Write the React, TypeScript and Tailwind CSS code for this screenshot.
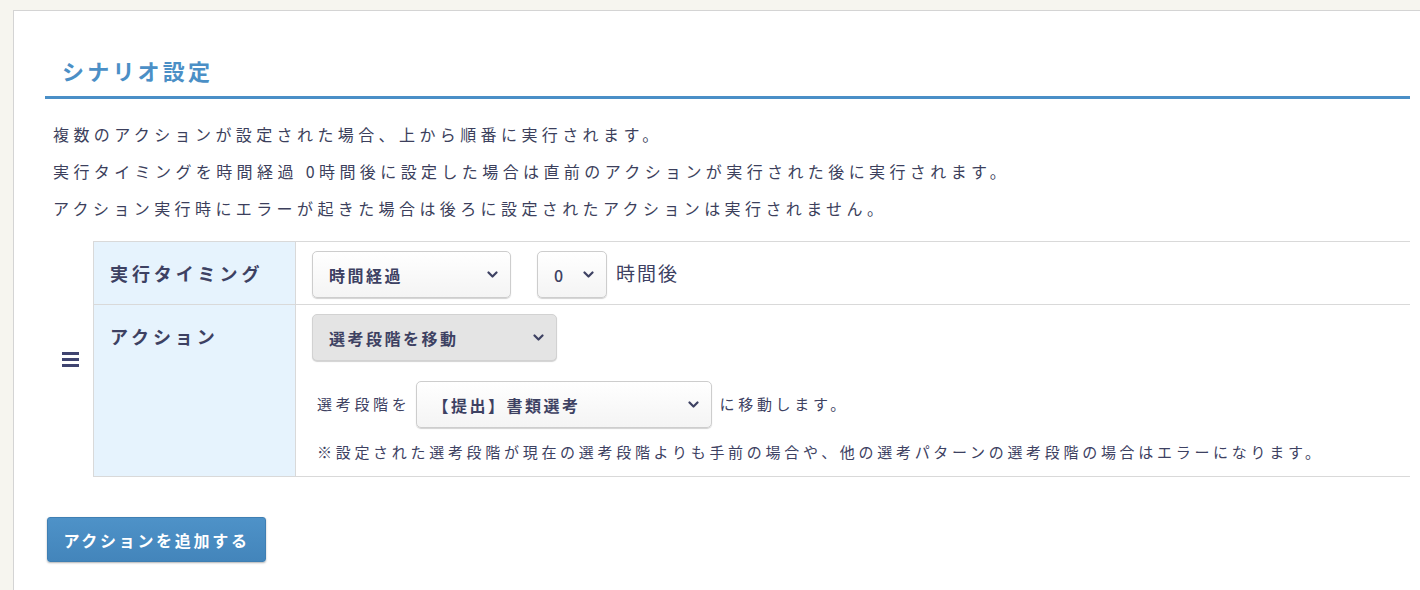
import React from "react";

const font = { fontFamily: '"Noto Sans CJK JP", "Noto Sans", sans-serif' };

function Chevron({ className = "" }: { className?: string }) {
  return (
    <svg width="11" height="8" viewBox="0 0 11 8" className={className}>
      <path d="M1.5 1.5 L5.5 5.5 L9.5 1.5" fill="none" stroke="#3d4162" strokeWidth="2.2" strokeLinecap="round" strokeLinejoin="round" />
    </svg>
  );
}

function FakeSelect({
  width,
  label,
  gray = false,
  bold = true,
}: {
  width: string;
  label: string;
  gray?: boolean;
  bold?: boolean;
}) {
  return (
    <div
      className={`${width} h-[47px] flex items-center justify-between pl-[16px] pr-[12px] rounded-[5px] border ${
        gray
          ? "bg-[#e4e4e4] border-[#d2d2d2]"
          : "bg-gradient-to-b from-white to-[#f4f4f4] border-[#cdcdcd]"
      } shadow-[0_1px_1px_rgba(0,0,0,0.18)]`}
    >
      <span className={`text-[16px] tracking-[2.5px] text-[#3d4162] ${bold ? "font-bold" : "font-medium"}`}>{label}</span>
      <Chevron />
    </div>
  );
}

export default function App() {
  return (
    <div style={font} className="w-[1420px] h-[590px] bg-[#f6f5ef] pt-[10px] pl-[13px] overflow-hidden">
      <div className="h-full bg-white border-l border-t border-[#d4d4d4] pl-[31px] pr-[10px]">
        {/* Title */}
        <div className="pt-[44px] pb-[11px] border-b-[3px] border-[#4a8fc7] pl-[17px]">
          <h2 className="text-[22px] leading-[30px] font-bold tracking-[3.2px] text-[#4b8fc6]">シナリオ設定</h2>
        </div>

        {/* Description */}
        <div className="mt-[17px] pl-[8px] text-[16px] leading-[37px] tracking-[4.4px] text-[#3c3f5c]">
          <p>複数のアクションが設定された場合、上から順番に実行されます。</p>
          <p>実行タイミングを時間経過 0時間後に設定した場合は直前のアクションが実行された後に実行されます。</p>
          <p>アクション実行時にエラーが起きた場合は後ろに設定されたアクションは実行されません。</p>
        </div>

        {/* Table with handle */}
        <div className="mt-[14px] flex">
          <div className="w-[48px] flex items-center justify-center">
            <div className="flex flex-col gap-[3px] pl-[3px]">
              <span className="block w-[17px] h-[3px] bg-[#3f4470]" />
              <span className="block w-[17px] h-[3px] bg-[#3f4470]" />
              <span className="block w-[17px] h-[3px] bg-[#3f4470]" />
            </div>
          </div>
          <div className="flex-1 border-l border-t border-b border-[#d9d9d9]">
            {/* Row 1 */}
            <div className="flex h-[63px] border-b border-[#d9d9d9]">
              <div className="w-[202px] bg-[#e6f3fd] border-r border-[#d9d9d9] pl-[16px] pt-[18px]">
                <span className="text-[18px] leading-[26px] font-bold tracking-[3.9px] text-[#3d4162]">実行タイミング</span>
              </div>
              <div className="flex-1 flex items-start pt-[9px] pl-[16px]">
                <FakeSelect width="w-[199px]" label="時間経過" />
                <div className="ml-[26px]">
                  <FakeSelect width="w-[70px]" label="0" bold={false} />
                </div>
                <span className="ml-[9px] mt-[8px] text-[19px] leading-[28px] tracking-[2px] text-[#3d4162]">時間後</span>
              </div>
            </div>
            {/* Row 2 */}
            <div className="flex">
              <div className="w-[202px] bg-[#e6f3fd] border-r border-[#d9d9d9] pl-[16px] pt-[18px]">
                <span className="text-[18px] leading-[26px] font-bold tracking-[3.9px] text-[#3d4162]">アクション</span>
              </div>
              <div className="flex-1 pt-[9px] pl-[16px] pb-[12px]">
                <FakeSelect width="w-[245px]" label="選考段階を移動" gray />
                <div className="mt-[20px] flex items-center">
                  <span className="ml-[5px] text-[15px] tracking-[3.7px] text-[#3d4162]">選考段階を</span>
                  <div className="ml-[5px]">
                    <FakeSelect width="w-[296px]" label="【提出】書類選考" />
                  </div>
                  <span className="ml-[8px] text-[15px] tracking-[3.7px] text-[#3d4162]">に移動します。</span>
                </div>
                <p className="mt-[12px] ml-[5px] text-[15px] leading-[24px] tracking-[3.7px] text-[#3d4162]">
                  ※設定された選考段階が現在の選考段階よりも手前の場合や、他の選考パターンの選考段階の場合はエラーになります。
                </p>
              </div>
            </div>
          </div>
        </div>

        {/* Button */}
        <button className="mt-[40px] ml-[2px] w-[219px] h-[45px] rounded-[3px] bg-gradient-to-b from-[#4e92c8] to-[#4385bb] border border-[#3f7fb3] shadow-[0_1px_2px_rgba(0,0,0,0.3)] text-white text-[16px] font-bold tracking-[2.7px]">
          アクションを追加する
        </button>
      </div>
    </div>
  );
}
